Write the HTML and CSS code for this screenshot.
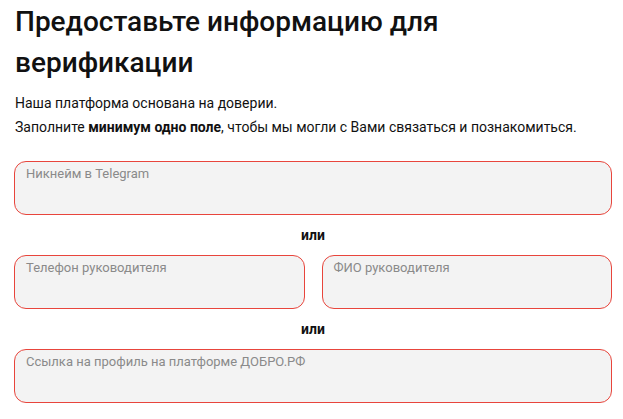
FILE: index.html
```html
<!DOCTYPE html>
<html lang="ru">
<head>
    <meta charset="UTF-8">
    <meta name="viewport" content="width=device-width, initial-scale=1.0">
    <title>Верификация</title>
    <link rel="stylesheet" href="styles.css">
</head>
<body>
    <div class="verify-form">
        <h1 class="verify-title">Предоставьте информацию для верификации</h1>
        <p class="verify-text">Наша платформа основана на доверии.</p>
        <p class="verify-text">Заполните <b>минимум одно поле</b>, чтобы мы могли с Вами связаться и познакомиться.</p>

        <div class="fields">
            <textarea class="field" placeholder="Никнейм в Telegram"></textarea>
            <div class="or">или</div>
            <div class="field-row">
                <textarea class="field" placeholder="Телефон руководителя"></textarea>
                <textarea class="field" placeholder="ФИО руководителя"></textarea>
            </div>
            <div class="or">или</div>
            <textarea class="field" placeholder="Ссылка на профиль на платформе ДОБРО.РФ"></textarea>
        </div>
    </div>
</body>
</html>
```

FILE: styles.css
```css
body {
    margin: 0;
    background: #fff;
    font-family: Roboto, "Noto Sans", Arial, sans-serif;
    color: #111;
}

.verify-form {
    padding: 0 11px 0 14px;
}

.verify-title {
    font-size: 28px;
    font-weight: 500;
    line-height: 41px;
    margin: 1px 0 8px 1px;
    max-width: 480px;
}

.verify-text {
    font-size: 14px;
    line-height: 24px;
    margin: 0 0 0 1px;
}

.verify-text b {
    font-weight: 700;
}

.fields {
    margin-top: 22px;
}

.field {
    display: block;
    box-sizing: border-box;
    width: 100%;
    height: 54px;
    margin: 0;
    padding: 4px 11px;
    border: 1px solid #e8453c;
    border-radius: 12px;
    background: #f3f3f3;
    font-family: Roboto, Arial, sans-serif;
    font-size: 13px;
    resize: none;
    outline: none;
}

.field::placeholder {
    color: #8a8a8a;
}

.field-row {
    display: flex;
    gap: 17px;
}

.or {
    text-align: center;
    font-size: 14px;
    font-weight: 700;
    line-height: 20px;
    padding: 10px 0;
}
```
